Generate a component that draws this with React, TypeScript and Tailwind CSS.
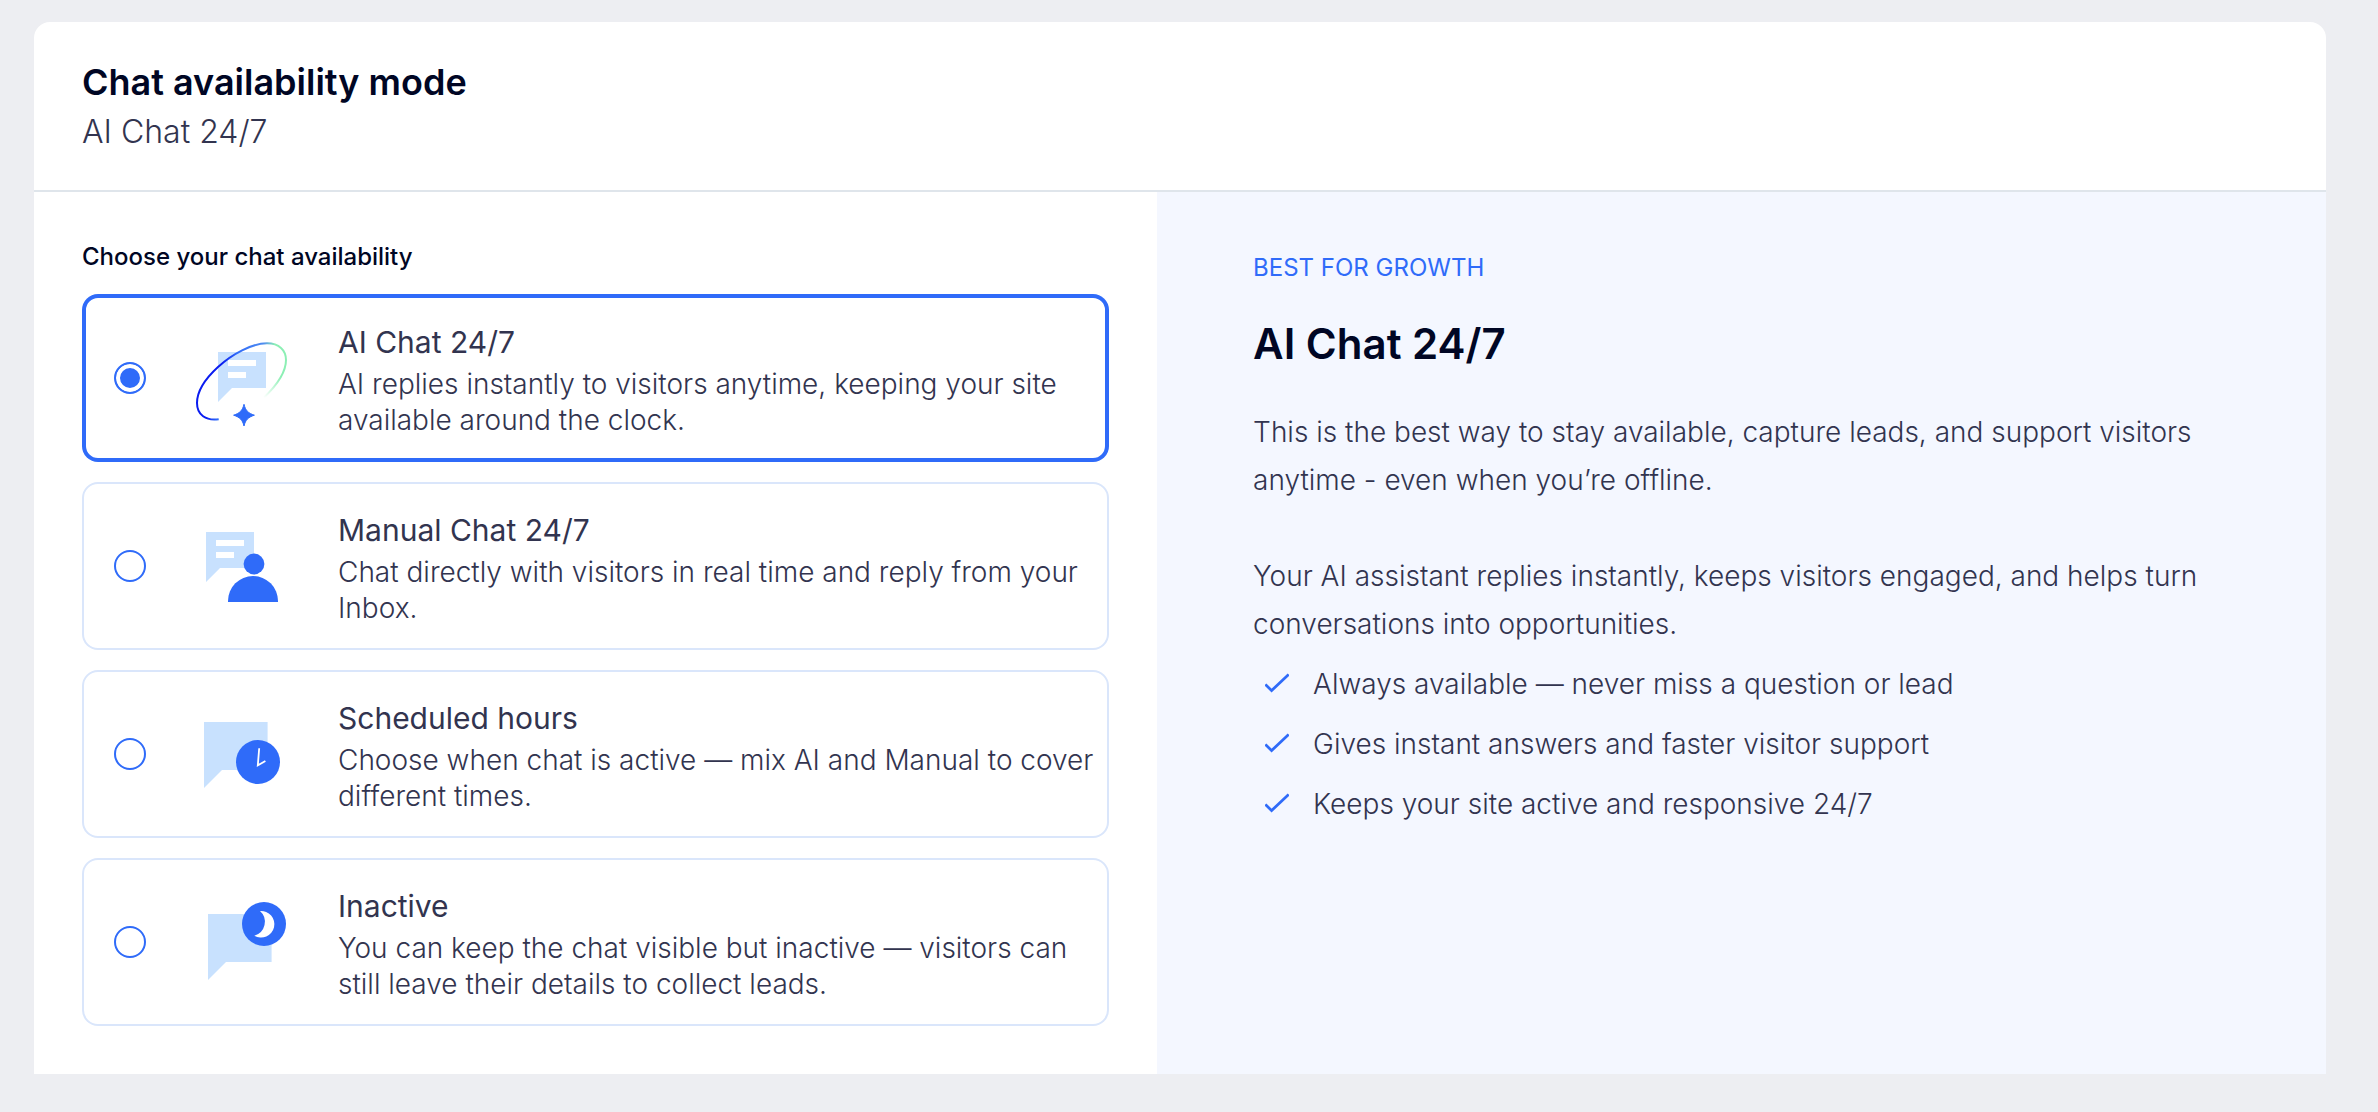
import { useState } from 'react';
import type { ReactNode } from 'react';
import clsx from 'clsx';

const colors = {
  blue: '#2F6BF9',
  bubble: '#C8E1FE',
};

const AiIcon = () => (
  <svg width="120" height="120" viewBox="0 0 120 120" fill="none" aria-hidden="true">
    <defs>
      <linearGradient id="orbit" x1="30" y1="60" x2="84" y2="76" gradientUnits="userSpaceOnUse">
        <stop offset="0.1" stopColor="#0A1CF0" />
        <stop offset="0.3" stopColor="#2F6BF9" />
        <stop offset="0.7" stopColor="#4F8CF0" />
        <stop offset="0.9" stopColor="#8CEFB4" />
      </linearGradient>
      <linearGradient id="orbitEnd" x1="104" y1="48" x2="82" y2="80" gradientUnits="userSpaceOnUse">
        <stop offset="0.3" stopColor="#8CEFB4" />
        <stop offset="1" stopColor="#8CEFB4" stopOpacity="0" />
      </linearGradient>
    </defs>
    <path d="M36 34H84V70H50L36 84Z" fill={colors.bubble} />
    <path d="M46 42H74V48H46ZM46 54H64V60H46Z" fill="#fff" />
    <path
      d="M36.7 101.2C24 103 15 97 15 85C15 72 24 60 36 49C50 36 70 25.3 85 25.3C97 25.3 104 32 104 42"
      stroke="url(#orbit)"
      strokeWidth="2"
    />
    <path d="M104 42C104 54 94 68 82 79.5" stroke="url(#orbitEnd)" strokeWidth="2" />
    <path
      d="M62 86.3C63.5 92.5 66.2 95.2 72.4 97.2C66.2 99.2 63.5 101.8 62 108C60.5 101.8 57.8 99.2 51.6 97.2C57.8 95.2 60.5 92.5 62 86.3Z"
      fill={colors.blue}
      stroke={colors.blue}
    />
  </svg>
);

const ManualIcon = () => (
  <svg width="120" height="120" viewBox="0 0 120 120" fill="none" aria-hidden="true">
    <path d="M24 26H72V62H38L24 76Z" fill={colors.bubble} />
    <path d="M34 34H62V40H34ZM34 46H52V52H34Z" fill="#fff" />
    <circle cx="72" cy="58" r="10.4" fill={colors.blue} />
    <path d="M46 96V95A25 25 0 0 1 96 95V96Z" fill={colors.blue} />
  </svg>
);

const ScheduleIcon = () => (
  <svg width="120" height="120" viewBox="0 0 120 120" fill="none" aria-hidden="true">
    <path d="M22 28H85.6V76H40L22 94Z" fill={colors.bubble} />
    <circle cx="76" cy="68" r="22" fill={colors.blue} />
    <path d="M77.2 54.2L75.8 71.4L83.4 67" stroke="#fff" strokeWidth="1.8" />
  </svg>
);

const InactiveIcon = () => (
  <svg width="120" height="120" viewBox="0 0 120 120" fill="none" aria-hidden="true">
    <path d="M26 32H89.6V80H44L26 98Z" fill={colors.bubble} />
    <circle cx="82" cy="42" r="22" fill={colors.blue} />
    <path d="M78 29A13.3 13.3 0 1 1 72.3 53.7A14.4 14.4 0 0 0 78 29Z" fill="#fff" />
  </svg>
);

interface Mode {
  id: string;
  title: string;
  description: string;
  icon: ReactNode;
}

const modes: Mode[] = [
  {
    id: 'ai',
    title: 'AI Chat 24/7',
    description: 'AI replies instantly to visitors anytime, keeping your site available around the clock.',
    icon: <AiIcon />,
  },
  {
    id: 'manual',
    title: 'Manual Chat 24/7',
    description: 'Chat directly with visitors in real time and reply from your Inbox.',
    icon: <ManualIcon />,
  },
  {
    id: 'scheduled',
    title: 'Scheduled hours',
    description: 'Choose when chat is active — mix AI and Manual to cover different times.',
    icon: <ScheduleIcon />,
  },
  {
    id: 'inactive',
    title: 'Inactive',
    description: 'You can keep the chat visible but inactive — visitors can still leave their details to collect leads.',
    icon: <InactiveIcon />,
  },
];

const benefits = [
  'Always available — never miss a question or lead',
  'Gives instant answers and faster visitor support',
  'Keeps your site active and responsive 24/7',
];

interface ModeCardProps {
  mode: Mode;
  selected: boolean;
  onSelect: () => void;
}

const ModeCard = ({ mode, selected, onSelect }: ModeCardProps) => (
  <label
    className={clsx(
      'flex items-center gap-9 rounded-2xl pl-8 pr-3 ring-inset cursor-pointer',
      selected ? 'ring-4 ring-[#2F6BF9]' : 'ring-2 ring-[#DAE6FB]',
    )}
  >
    <input
      type="radio"
      name="availability"
      checked={selected}
      onChange={onSelect}
      className="appearance-none shrink-0 w-8 h-8 rounded-full border-2 border-[#2F6BF9] bg-white checked:bg-[#2F6BF9] checked:shadow-[inset_0_0_0_4px_#fff]"
    />
    <span className="shrink-0">{mode.icon}</span>
    <span className="block flex-1 min-w-0 pt-7 pb-6">
      <span className="block mb-1 text-[30px] leading-10">{mode.title}</span>
      <span className="block text-[28px] leading-9 font-light">{mode.description}</span>
    </span>
  </label>
);

const ModeDetails = () => (
  <section className="flex-1 min-w-0 px-24 pt-14 bg-[#F4F7FF]">
    <p className="text-2xl leading-10 text-[#2F6BF9]">BEST FOR GROWTH</p>
    <h2 className="mt-8 mb-10 text-[42px] leading-12 font-semibold text-[#000624]">AI Chat 24/7</h2>
    <div className="text-[28px] leading-12 font-light">
      <p className="mb-12">
        This is the best way to stay available, capture leads, and support visitors anytime - even when you’re offline.
      </p>
      <p>
        Your AI assistant replies instantly, keeps visitors engaged, and helps turn conversations into opportunities.
      </p>
      <ul className="mt-1.5">
        {benefits.map((benefit) => (
          <li key={benefit} className="flex items-center gap-6 py-1.5 pl-3">
            <svg width="24" height="24" viewBox="0 0 24 24" fill="none" className="shrink-0" aria-hidden="true">
              <path d="M0.4 12.4L6.6 18.6L23.6 2.4" stroke={colors.blue} strokeWidth="2.7" />
            </svg>
            {benefit}
          </li>
        ))}
      </ul>
    </div>
  </section>
);

export default function App() {
  const [selectedId, setSelectedId] = useState('ai');

  return (
    <div className="min-h-screen pt-[22px] pl-[34px] pr-[52px] pb-9 bg-[#EDEEF2] text-[#32344F] font-['Inter',sans-serif]">
      <main className="rounded-t-2xl overflow-hidden bg-white">
        <header className="px-12 pt-9 pb-[34px] border-b-2 border-[#DFE5EB]">
          <h1 className="mb-0.5 text-4xl leading-12 font-semibold text-[#000624]">Chat availability mode</h1>
          <p className="text-[32px] leading-12 font-light">AI Chat 24/7</p>
        </header>
        <div className="flex">
          <fieldset className="w-[49%] p-12">
            <legend className="float-left mb-5 text-2xl leading-[34px] font-medium text-[#000624]">
              Choose your chat availability
            </legend>
            <div className="clear-both flex flex-col gap-5">
              {modes.map((mode) => (
                <ModeCard
                  key={mode.id}
                  mode={mode}
                  selected={mode.id === selectedId}
                  onSelect={() => setSelectedId(mode.id)}
                />
              ))}
            </div>
          </fieldset>
          <ModeDetails />
        </div>
      </main>
    </div>
  );
}
